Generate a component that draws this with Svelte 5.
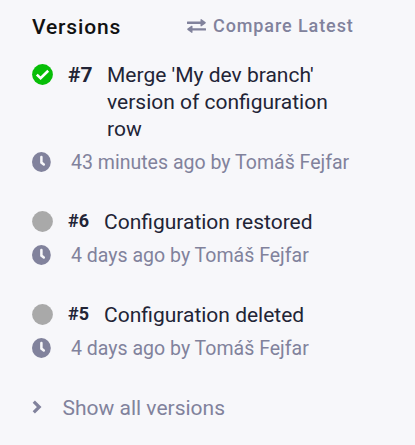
<script>
  const versions = [
    { id: 7, title: "Merge 'My dev branch' version of configuration row", age: '43 minutes ago', active: true },
    { id: 6, title: 'Configuration restored', age: '4 days ago', active: false },
    { id: 5, title: 'Configuration deleted', age: '4 days ago', active: false }
  ];
  const author = 'Tomáš Fejfar';
</script>

<aside class="sidebar">
  <header>
    <h2>Versions</h2>
    <a class="compare" href="#compare">
      <svg width="19" height="14" viewBox="0 0 19 14">
        <path d="M0.5 2.5H13.5V0.8Q13.6 -0.2 14.5 0.2L18.4 3.1Q19.2 3.8 18.4 4.5L14.5 7.3Q13.6 7.7 13.5 6.7V5H0.5Q0 5 0 4.5V3Q0 2.5 0.5 2.5ZM18.5 9.2H5.5V7.3Q5.4 6.3 4.5 6.8L0.6 9.6Q-0.2 10.3 0.6 11L4.5 13.8Q5.4 14.2 5.5 13.2V11.6H18.5Q19 11.6 19 11.1V9.7Q19 9.2 18.5 9.2Z" />
      </svg>
      <span>Compare Latest</span>
    </a>
  </header>

  <ul>
    {#each versions as v}
      <li>
        <div class="row" class:active={v.active}>
          <span class="icon">
            <svg width="21" height="21" viewBox="0 0 21 21">
              <circle class="dot" cx="10.5" cy="10.5" r="10.4" />
              {#if v.active}
                <path class="check" d="M4.8 10.6L8.6 14.2L16.2 6.7" />
              {/if}
            </svg>
          </span>
          <strong>#{v.id}</strong>
          <span class="title">{v.title}</span>
        </div>
        <div class="row meta">
          <span class="icon">
            <svg width="19" height="20" viewBox="0 0 19 20">
              <ellipse cx="9.4" cy="10" rx="9.4" ry="9.9" />
              <path class="hands" d="M9.4 5V10.6L11.8 12.5" />
            </svg>
          </span>
          <span class="by">{v.age} by {author}</span>
        </div>
      </li>
    {/each}
  </ul>

  <a class="all" href="#versions">
    <svg width="10" height="14" viewBox="0 0 10 14">
      <path d="M1.8 1.7L7.2 7L1.8 12.3" />
    </svg>
    <span>Show all versions</span>
  </a>
</aside>

<style>
  :global(body) {
    background: #f7f7fa;
  }
  .sidebar {
    box-sizing: border-box;
    height: 445px;
    padding: 14px 32px 0;
    background: #f7f7fa;
    font: 400 21px/27px Roboto, sans-serif;
    color: #222436;
    overflow: hidden;
  }
  a {
    color: #81829c;
    text-decoration: none;
  }
  svg {
    display: block;
    flex: none;
  }
  header {
    display: flex;
    height: 48px;
  }
  h2 {
    margin: 0;
    width: 155px;
    font-size: 21px;
    font-weight: 500;
    letter-spacing: 0.85px;
    color: #111;
  }
  .compare {
    display: flex;
    align-items: flex-start;
    font-size: 18px;
    line-height: 24px;
    font-weight: 500;
    letter-spacing: 0.9px;
    white-space: nowrap;
  }
  .compare svg {
    margin: 5px 7px 0 0;
    fill: #81829c;
  }
  ul {
    list-style: none;
    margin: 0;
    padding: 0;
  }
  li {
    margin-bottom: 33px;
  }
  .row {
    display: flex;
  }
  .icon {
    width: 36px;
    flex: none;
    padding-top: 2px;
  }
  .dot {
    fill: #a9a9a9;
  }
  .active .dot {
    fill: #07be07;
  }
  .check {
    fill: none;
    stroke: #fff;
    stroke-width: 2.6;
  }
  strong {
    width: 36px;
    flex: none;
    font-size: 18px;
    line-height: 24px;
    font-weight: 700;
  }
  .active strong {
    width: 39px;
    font-size: 21px;
    line-height: 27px;
  }
  .title {
    width: 230px;
  }
  .meta {
    margin-top: 6px;
    color: #81829c;
    white-space: nowrap;
  }
  .meta .icon {
    width: 39px;
    padding-top: 3px;
  }
  .meta svg {
    fill: #81829c;
  }
  .hands {
    fill: none;
    stroke: #f7f7fa;
    stroke-width: 2.5;
    stroke-linecap: round;
  }
  .by {
    font-size: 19.55px;
  }
  .all {
    display: flex;
    align-items: center;
  }
  .all svg {
    margin: -3px 20.5px 0 0;
    fill: none;
    stroke: #81829c;
    stroke-width: 3.2;
  }
</style>
